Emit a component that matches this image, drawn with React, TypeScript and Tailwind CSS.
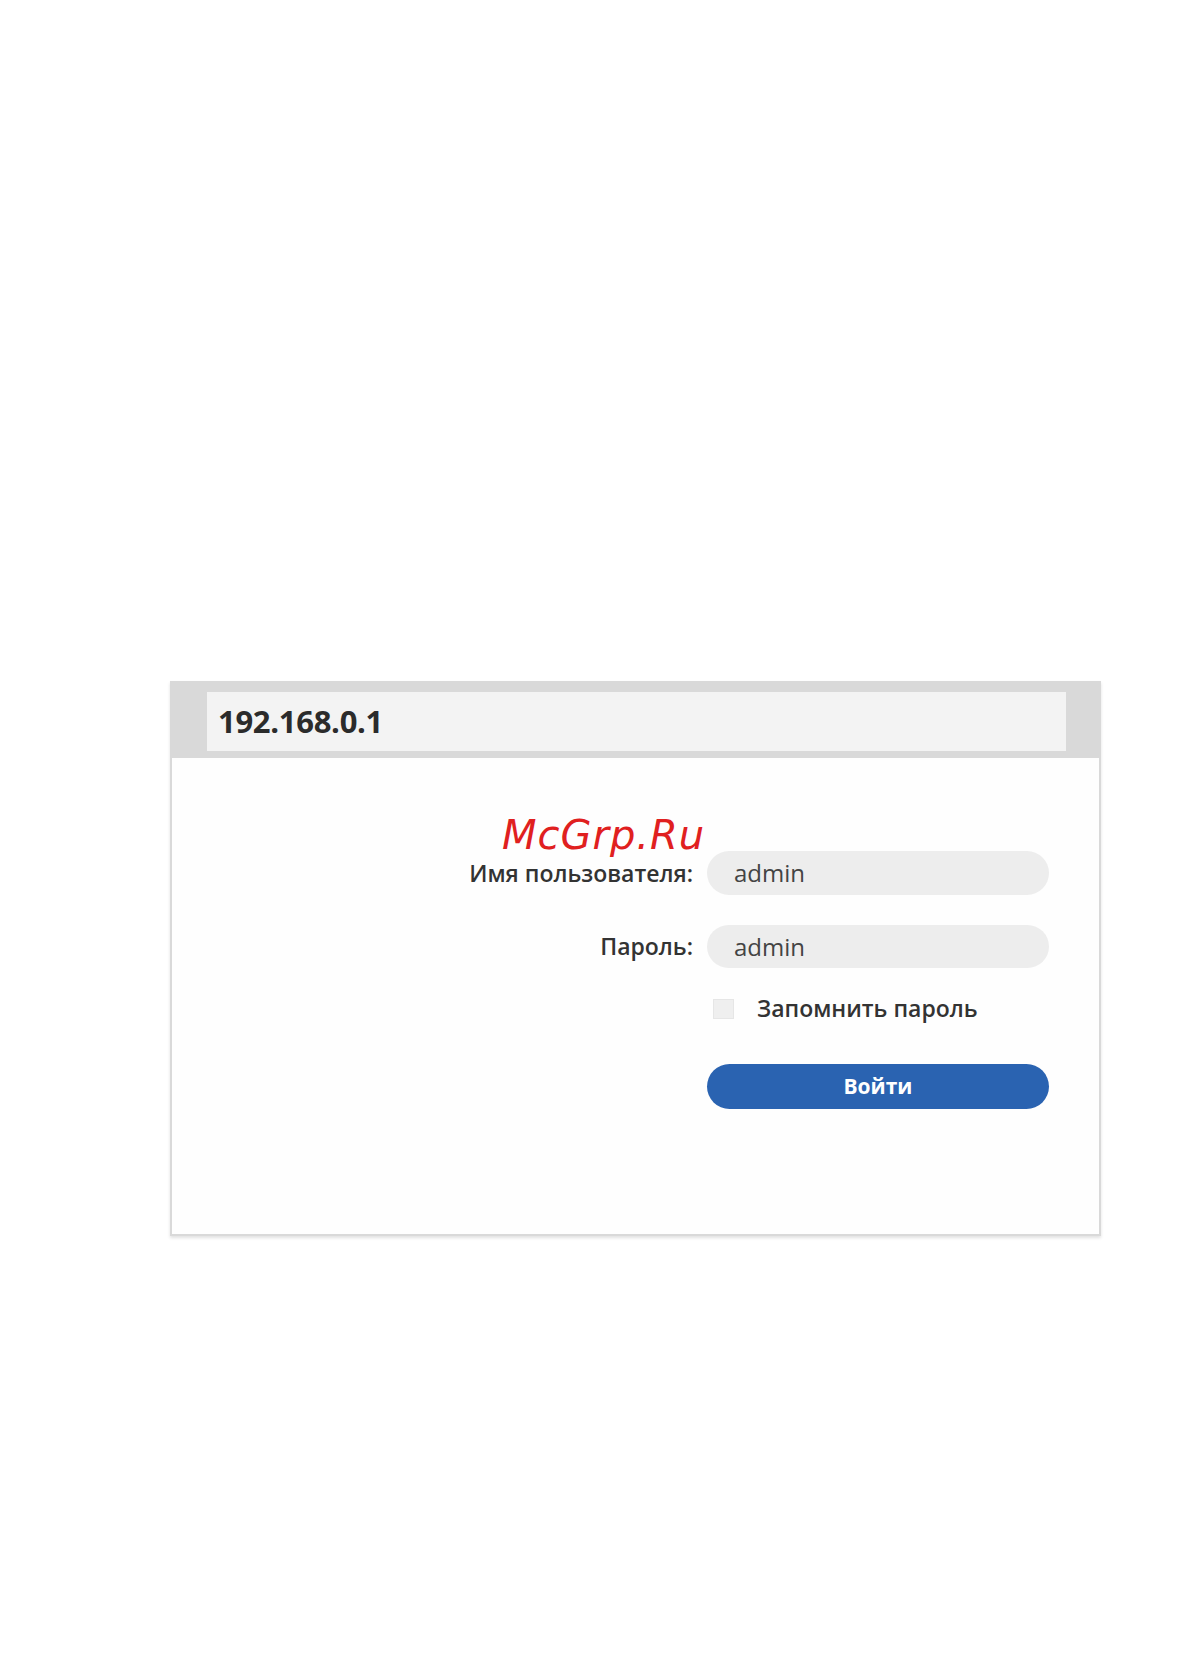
import React from 'react';

// Router login page as shown in the manual screenshot
const App: React.FC = () => {
  return (
    <div className="w-[1192px] h-[1680px] bg-white pt-[681px] pl-[170px] font-['Open_Sans',sans-serif]">
      <div className="relative w-[931px] h-[555px] flex flex-col bg-[#d9d9d9] p-[2px] shadow-[0_2px_3px_rgba(0,0,0,0.12)]">
        {/* Browser address bar */}
        <div className="h-[75px] flex pt-[9px] pb-[7px] pl-[35px] pr-[33px]">
          <div className="flex-1 flex items-center bg-[#f3f3f3] pl-[11px]">
            <span className="text-[31px] font-bold tracking-[-0.3px] text-[#2b2b2b] leading-none">192.168.0.1</span>
          </div>
        </div>

        {/* Login form */}
        <div className="flex-1 bg-[#fefefe] pt-[93px] pr-[50px]">
          <div className="grid grid-cols-[1fr_342px] gap-x-[14px] items-center">
            <span className="text-right text-[23px] font-semibold text-[#333] leading-none">Имя пользователя:</span>
            <div className="h-[44px] rounded-full bg-[#ededed] flex items-center pl-[27px] text-[24px] font-medium text-[#444]">admin</div>

            <span className="mt-[30px] text-right text-[23px] font-semibold text-[#333] leading-none">Пароль:</span>
            <div className="mt-[30px] h-[43px] rounded-full bg-[#ededed] flex items-center pl-[27px] text-[24px] font-medium text-[#444]">admin</div>

            <span />
            <label className="mt-[29px] flex items-center gap-[23px] pl-[6px]">
              <span className="w-[21px] h-[20px] bg-[#efefef] border border-[#e6e6e6]" />
              <span className="text-[23px] font-semibold text-[#333] leading-none">Запомнить пароль</span>
            </label>

            <span />
            <button className="mt-[44px] h-[45px] rounded-full bg-[#2a63b1] text-white text-[21px] font-bold">Войти</button>
          </div>
        </div>

        {/* Site watermark */}
        <span className="absolute left-[332px] top-[134px] text-[40px] italic text-[#e0201f] leading-none font-['DejaVu_Sans',sans-serif] tracking-[1px]">McGrp.Ru</span>
      </div>
    </div>
  );
};

export default App;
